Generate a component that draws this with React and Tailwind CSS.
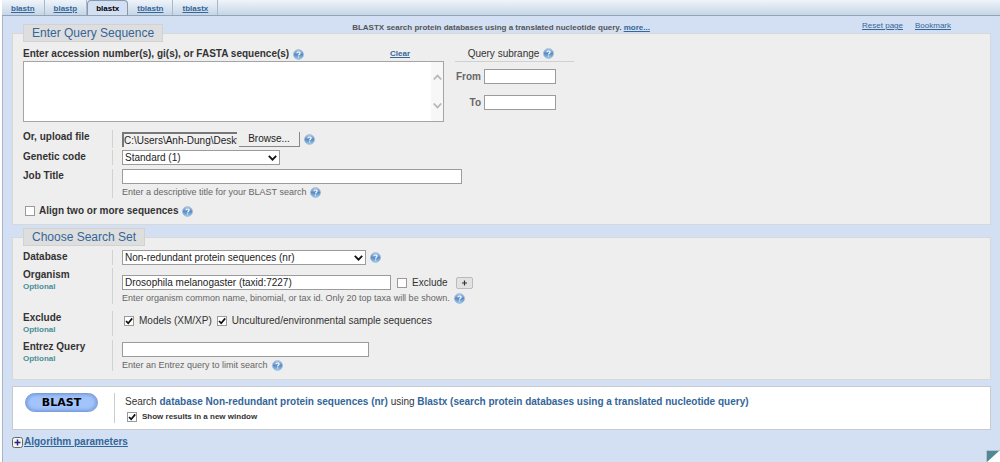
import { useState } from 'react';

const tabs = ['blastn', 'blastp', 'blastx', 'tblastn', 'tblastx'];

function HelpButton() {
  return (
    <button type="button" aria-label="Help" className="block shrink-0">
      <svg width="11" height="11" viewBox="0 0 11 11">
        <defs>
          <linearGradient id="help" x1="0" y1="0" x2="0" y2="1">
            <stop offset="0" stopColor="#b4cce6" />
            <stop offset="0.5" stopColor="#5a8bc2" />
            <stop offset="1" stopColor="#9ccdf2" />
          </linearGradient>
        </defs>
        <circle cx="5.5" cy="5.5" r="5" fill="url(#help)" stroke="#9dbbdc" strokeWidth="0.7" />
        <path
          d="M3.9 4.2C3.9 2.5 7.1 2.5 7.1 4.2C7.1 5.3 5.6 5.2 5.6 6.5M5.6 7.5V8.5"
          fill="none"
          stroke="#fff"
          strokeWidth="1.1"
        />
      </svg>
    </button>
  );
}

function CheckBox({ id, checked = false }) {
  return (
    <span className="relative block h-[10px] w-[10px] shrink-0">
      <input
        id={id}
        type="checkbox"
        defaultChecked={checked}
        className="peer block h-[10px] w-[10px] appearance-none border border-[#9a9a9a] bg-white"
      />
      <svg
        className="pointer-events-none absolute inset-0 hidden peer-checked:block"
        width="10"
        height="10"
        viewBox="0 0 10 10"
      >
        <path d="M2 5L4.2 7.2L8.2 2.4" fill="none" stroke="#111" strokeWidth="1.7" />
      </svg>
    </span>
  );
}

function Select({ id, label, width }) {
  return (
    <span className={`relative block ${width}`}>
      <select
        id={id}
        className="block h-[15px] w-full appearance-none border border-[#9b9b9b] bg-white pl-[2px] text-[10px] leading-[13px] text-[#222]"
      >
        <option>{label}</option>
      </select>
      <svg
        className="pointer-events-none absolute right-[3px] top-1"
        width="9"
        height="8"
        viewBox="0 0 9 8"
      >
        <path d="M0.8 1.8L4.5 5.6L8.2 1.8" fill="none" stroke="#111" strokeWidth="1.8" />
      </svg>
    </span>
  );
}

function TextInput({ id, width, value = '' }) {
  return (
    <input
      id={id}
      type="text"
      defaultValue={value}
      className={`block h-[15px] border border-[#9b9b9b] bg-white px-[2px] text-[10px] text-[#222] ${width}`}
    />
  );
}

function Row({ label, htmlFor, optional, className = '', children }) {
  return (
    <div className={`flex ${className}`}>
      <div className="w-[89px] shrink-0">
        <label htmlFor={htmlFor} className="block font-bold leading-[13px]">
          {label}
        </label>
        {optional && (
          <span className="block text-[8px] font-bold leading-3 text-[#4a8f98]">Optional</span>
        )}
      </div>
      <div className="min-w-0 flex-1 border-l border-[#d2d2d2] pl-[9px]">{children}</div>
    </div>
  );
}

function Hint({ children }) {
  return (
    <div className="mt-[2px] flex items-center gap-1 text-[9px] leading-3 text-[#666]">
      <span>{children}</span>
      <HelpButton />
    </div>
  );
}

function Section({ title, className = '', children }) {
  return (
    <fieldset
      className={`min-w-0 border border-[#d6d8da] bg-[#eeeeee] px-[10px] ${className}`}
    >
      <legend className="border border-[#d2d2d2] bg-[#dedede] px-2 text-[12px] leading-4 text-[#336699]">
        {title}
      </legend>
      {children}
    </fieldset>
  );
}

export default function App() {
  const [active, setActive] = useState('blastx');

  return (
    <div className="flex min-h-screen flex-col bg-white pl-[2px] font-['Liberation_Sans',Arial,sans-serif] text-[10px] text-[#333]">
      {/* Tabs */}
      <nav className="flex h-4 items-stretch border-b border-[#94a3b3] bg-linear-to-b from-[#eff4fa] to-[#c6d6e7]">
        {tabs.map((tab) => (
          <a
            key={tab}
            href={`#${tab}`}
            onClick={() => setActive(tab)}
            className={
              tab === active
                ? 'rounded-t-sm border-x border-t border-[#8798aa] bg-[#d3dff3] px-2 pt-[2px] text-[8px] font-bold leading-3 text-black'
                : 'border-r border-[#a9b9c9] px-[9px] pt-[3px] text-[8px] font-bold leading-3 text-[#336699] underline'
            }
          >
            {tab}
          </a>
        ))}
      </nav>

      <main className="relative flex-1 border-l border-[#a6b5c6] bg-[#d3dff3] pl-[9px] pr-[9px]">
        {/* Page description */}
        <div className="flex h-2 items-start pr-10">
          <p className="flex-1 pl-[18px] pt-[6px] text-center text-[8px] font-bold leading-3 text-[#555]">
            BLASTX search protein databases using a translated nucleotide query.{' '}
            <a href="#more" className="text-[#336699] underline">more...</a>
          </p>
          <div className="-ml-[110px] flex gap-3 pt-1 text-[8px] leading-3 text-[#336699]">
            <a href="#reset" className="underline">Reset page</a>
            <a href="#bookmark" className="underline">Bookmark</a>
          </div>
        </div>

        <form onSubmit={(e) => e.preventDefault()}>
          {/* Query sequence */}
          <Section title="Enter Query Sequence" className="pb-[7px]">
            <div className="flex gap-[11px] pt-[6px]">
              <div className="w-[421px]">
                <div className="flex items-center gap-1 leading-3">
                  <label htmlFor="query" className="font-bold">
                    Enter accession number(s), gi(s), or FASTA sequence(s)
                  </label>
                  <HelpButton />
                  <a href="#clear" className="ml-auto mr-[34px] text-[8px] font-bold text-[#336699] underline">
                    Clear
                  </a>
                </div>
                <div className="relative mt-px">
                  <textarea
                    id="query"
                    className="block h-[61px] w-full resize-none border border-[#a5a5a5] bg-white"
                  />
                  <div className="pointer-events-none absolute inset-y-px right-px flex w-3 flex-col items-center justify-between bg-[#f7f7f7] py-3">
                    <svg width="9" height="7" viewBox="0 0 9 7">
                      <path d="M0.8 5.5L4.5 1.5L8.2 5.5" fill="none" stroke="#b5b5b5" strokeWidth="1.8" />
                    </svg>
                    <svg width="9" height="7" viewBox="0 0 9 7">
                      <path d="M0.8 1.5L4.5 5.5L8.2 1.5" fill="none" stroke="#b5b5b5" strokeWidth="1.8" />
                    </svg>
                  </div>
                </div>
              </div>
              <div className="w-[119px]">
                <div className="flex h-[14px] items-start justify-center gap-1 border-b border-[#d0d0d0] pr-[7px] leading-3">
                  <span>Query subrange</span>
                  <HelpButton />
                </div>
                <div className="mt-[7px] flex flex-col gap-[11px] text-[#666]">
                  <div className="flex items-center gap-[3px]">
                    <label htmlFor="from" className="w-[26px] text-right font-bold">From</label>
                    <TextInput id="from" width="w-[72px]" />
                  </div>
                  <div className="flex items-center gap-[3px]">
                    <label htmlFor="to" className="w-[26px] text-right font-bold">To</label>
                    <TextInput id="to" width="w-[72px]" />
                  </div>
                </div>
              </div>
            </div>

            <Row label="Or, upload file" htmlFor="file" className="mt-2">
              <div className="flex items-center pb-px pt-[2px]">
                <input
                  id="file"
                  type="text"
                  readOnly
                  value="C:\Users\Anh-Dung\Desktop"
                  className="block h-[15px] w-[115px] border-l-2 border-t-2 border-[#777] bg-[#f1f1f1] text-[10px] text-[#222]"
                />
                <button
                  type="button"
                  className="ml-[2px] h-[15px] w-[61px] border-b border-r border-[#888] bg-[#efefef] text-[10px] leading-3 text-[#222]"
                >
                  Browse...
                </button>
                <span className="ml-1">
                  <HelpButton />
                </span>
              </div>
            </Row>
            <Row label="Genetic code" htmlFor="code" className="mt-[2px]">
              <Select id="code" label="Standard (1)" width="w-[158px]" />
            </Row>
            <Row label="Job Title" htmlFor="title" className="mt-1">
              <TextInput id="title" width="w-[340px]" />
              <Hint>Enter a descriptive title for your BLAST search</Hint>
            </Row>
            <div className="mt-[7px] flex items-center gap-1 pl-[2px] leading-3">
              <CheckBox id="align" />
              <label htmlFor="align" className="font-bold">Align two or more sequences</label>
              <HelpButton />
            </div>
          </Section>

          {/* Search set */}
          <Section title="Choose Search Set" className="mt-[3px] pb-2">
            <Row label="Database" htmlFor="database" className="mt-1">
              <div className="flex items-center gap-1">
                <Select id="database" label="Non-redundant protein sequences (nr)" width="w-[244px]" />
                <HelpButton />
              </div>
            </Row>
            <Row label="Organism" htmlFor="organism" optional className="mt-[3px]">
              <div className="flex items-center pt-[7px]">
                <TextInput id="organism" width="w-[269px]" value="Drosophila melanogaster (taxid:7227)" />
                <span className="ml-[6px] flex items-center gap-[5px]">
                  <CheckBox id="exclude" />
                  <label htmlFor="exclude">Exclude</label>
                </span>
                <button
                  type="button"
                  aria-label="Add organism"
                  className="ml-2 flex h-3 w-[17px] items-center justify-center rounded-xs border border-[#bbb] bg-[#e2e2e2]"
                >
                  <svg width="7" height="8" viewBox="0 0 7 8">
                    <path d="M3.5 1.5V6.5M1 4H6" stroke="#333" strokeWidth="1.2" />
                  </svg>
                </button>
              </div>
              <Hint>Enter organism common name, binomial, or tax id. Only 20 top taxa will be shown.</Hint>
            </Row>
            <Row label="Exclude" htmlFor="models" optional className="mt-[7px]">
              <div className="flex items-center gap-[5px] pl-[2px] pt-1 leading-3">
                <CheckBox id="models" checked />
                <label htmlFor="models">Models (XM/XP)</label>
                <CheckBox id="uncultured" checked />
                <label htmlFor="uncultured">Uncultured/environmental sample sequences</label>
              </div>
            </Row>
            <Row label="Entrez Query" htmlFor="entrez" optional className="mt-1">
              <div className="pt-[2px]">
                <TextInput id="entrez" width="w-[247px]" />
              </div>
              <Hint>Enter an Entrez query to limit search</Hint>
            </Row>
          </Section>

          {/* Submit */}
          <div className="mt-[6px] flex border border-[#c9cbcf] bg-white py-[6px] pl-3">
            <button
              type="submit"
              className="h-[19px] w-[73px] rounded-full border border-[#7f9fd4] bg-[#a3c4fa] font-['DejaVu_Sans',sans-serif] text-[11px] font-bold leading-4 text-black shadow-[inset_0_0_4px_#5b86d6]"
            >
              BLAST
            </button>
            <div className="ml-4 border-l border-[#ccc] pl-[10px]">
              <p className="leading-[18px] text-[#336699]">
                <span className="text-[#333]">Search</span> <b>database Non-redundant protein sequences (nr)</b>{' '}
                <span className="text-[#333]">using</span>{' '}
                <b>Blastx (search protein databases using a translated nucleotide query)</b>
              </p>
              <div className="flex items-center gap-[5px] pl-[2px] leading-3">
                <CheckBox id="window" checked />
                <label htmlFor="window" className="text-[8px] font-bold">Show results in a new window</label>
              </div>
            </div>
          </div>
        </form>

        {/* Algorithm parameters */}
        <a href="#parameters" className="mt-[6px] flex w-fit items-center gap-px font-bold leading-3 text-[#336699]">
          <svg width="11" height="11" viewBox="0 0 11 11">
            <rect x="0.5" y="0.5" width="10" height="10" rx="2" fill="#f5f5ee" stroke="#666" />
            <path d="M5.5 2.5V8.5M2.5 5.5H8.5" stroke="#22228a" strokeWidth="1.5" />
          </svg>
          <span className="underline">Algorithm parameters</span>
        </a>

        <svg className="absolute bottom-0 right-0" width="14" height="12" viewBox="0 0 14 12">
          <path d="M0 0H14V12H0Z" fill="#fff" />
          <path d="M1 1H13L1 12Z" fill="#4d8a95" />
          <path d="M0.5 12V0.5H14" fill="none" stroke="#b8c0c8" />
        </svg>
      </main>
    </div>
  );
}
